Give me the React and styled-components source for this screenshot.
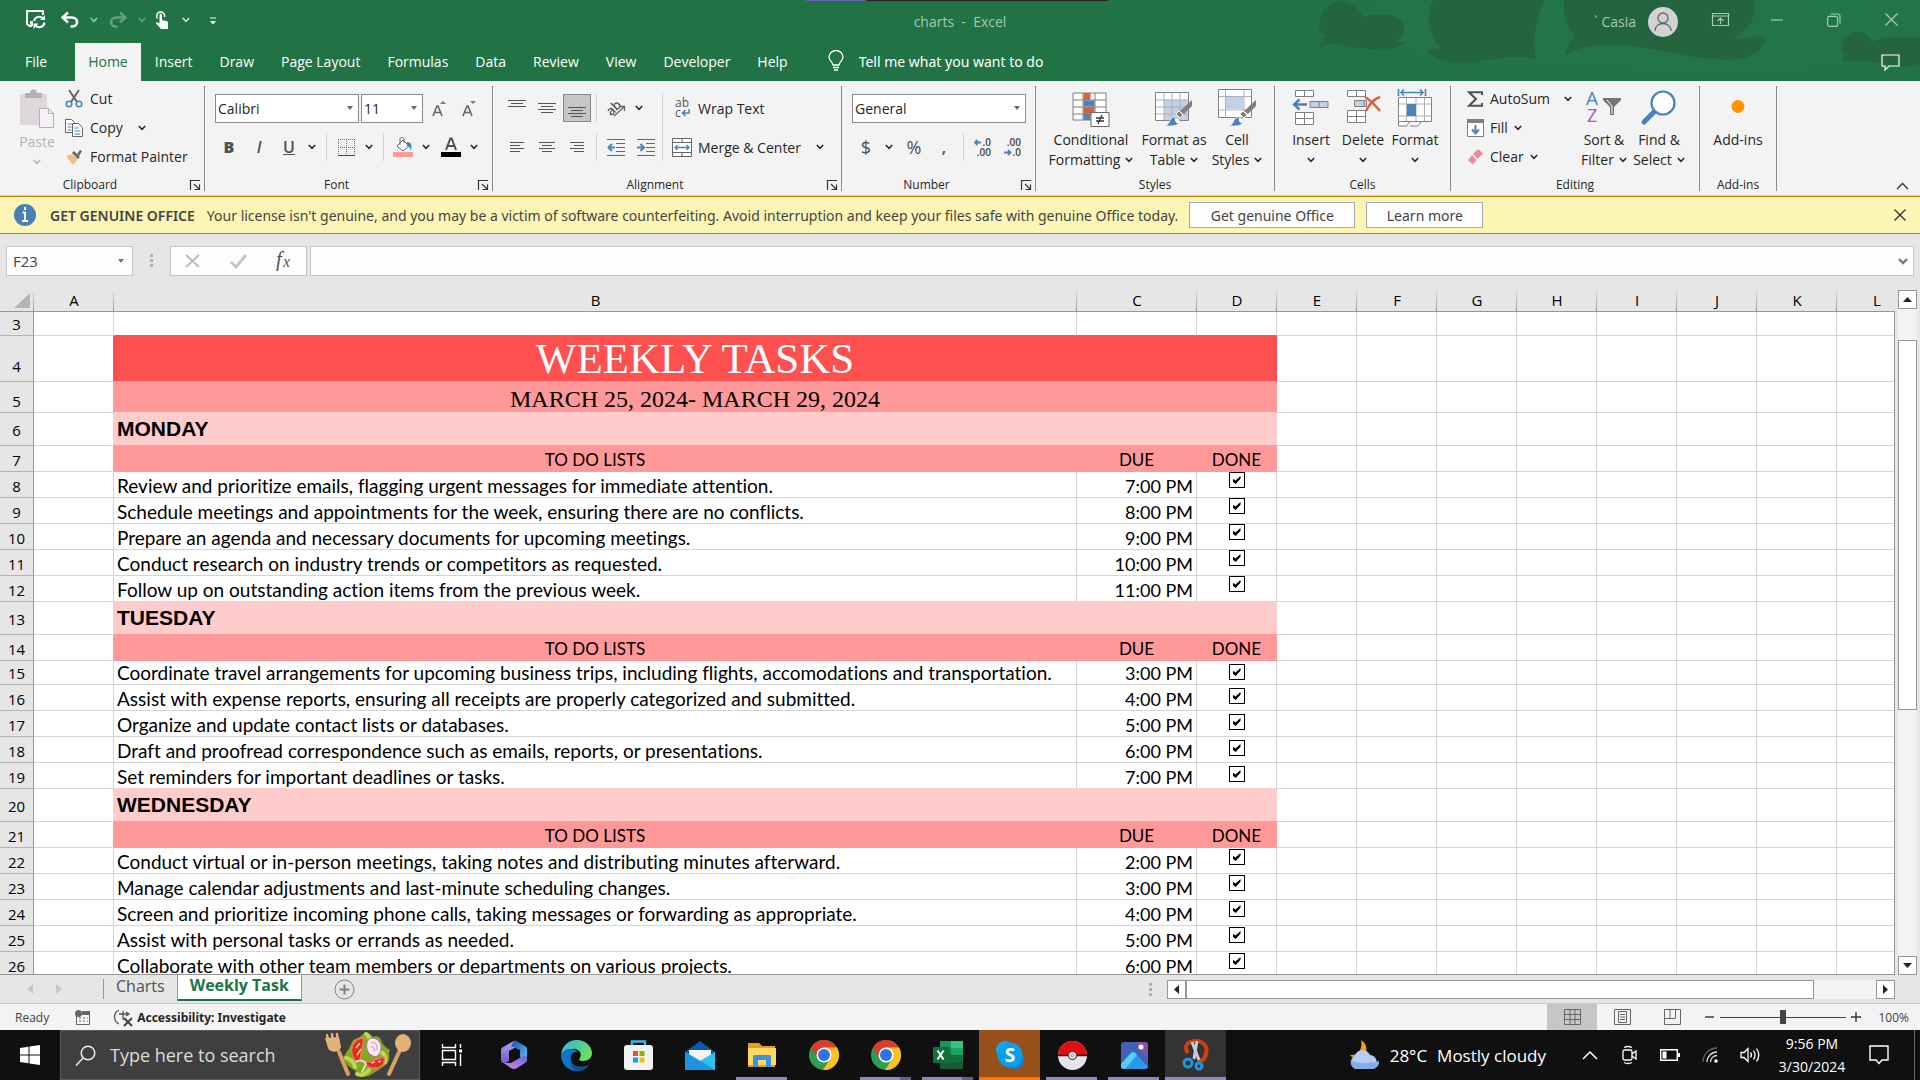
import React from "react";
import styled, { createGlobalStyle, css } from "styled-components";

const Global = createGlobalStyle`
  * { box-sizing: border-box; }
  html, body { margin: 0; padding: 0; }
  body { overflow: hidden; font-family: "Open Sans", "Noto Sans", sans-serif; font-size: 14px; color: #262626; }
  button, input, select { font: inherit; color: inherit; margin: 0; }
  svg { display: block; flex: none; overflow: visible; }
`;

const SHEET_FONT = '"Lato", "Open Sans", sans-serif';
const WIDE_UI_FONT = '"Noto Sans", "Open Sans", sans-serif';
const EXCEL_GREEN = "#217346";

const Window = styled.div`
  height: 100vh;
  display: flex;
  flex-direction: column;
  background: #e6e6e6;
`;

const PlainButton = styled.button`
  border: 0;
  padding: 0;
  background: transparent;
  display: flex;
  align-items: center;
  justify-content: center;
`;

/* ---------- header ---------- */
const Header = styled.header`
  position: relative;
  flex: none;
  background: ${EXCEL_GREEN};
  color: #fff;
`;
const HeaderArt = styled.svg`
  position: absolute;
  top: 0;
  right: 0;
`;
const TopStrip = styled.div`
  position: absolute;
  top: 0;
  left: 42%;
  width: 302px;
  height: 1px;
  background: linear-gradient(90deg, #6264a7 60px, #242424 60px);
`;
const TitleBar = styled.div`
  position: relative;
  height: 43px;
  display: grid;
  grid-template-columns: 1fr auto 1fr;
  align-items: center;
`;
const QuickAccess = styled.div`
  display: flex;
  align-items: center;
  padding: 0 0 4px 26px;
`;
const QuickButton = styled(PlainButton)`
  width: ${(p) => p.$w}px;
  height: 28px;
  opacity: ${(p) => (p.$dim ? 0.3 : 1)};
`;
const DocTitle = styled.div`
  color: #a3cbb2;
  white-space: pre;
`;
const WindowTools = styled.div`
  display: flex;
  align-items: center;
  justify-content: flex-end;
  color: #a3cbb2;
  padding-right: 15px;
`;
const Avatar = styled.span`
  width: 30px;
  height: 30px;
  margin: 0 28px 0 12px;
  border-radius: 50%;
  background: #d2d2d2;
  display: grid;
  place-items: center;
`;
const WindowButton = styled(PlainButton)`
  width: 28px;
  height: 28px;
  margin: 0 0 4px ${(p) => p.$gap || 0}px;
`;
const TabStrip = styled.nav`
  position: relative;
  height: 38px;
  display: flex;
  align-items: stretch;
  padding: 0 20px 0 12px;
`;
const RibbonTab = styled(PlainButton)`
  padding: 0 13px 2px;
  margin-right: ${(p) => (p.$first ? 15 : 1)}px;
  background: ${(p) => (p.$active ? "#f3f3f3" : "transparent")};
  color: ${(p) => (p.$active ? EXCEL_GREEN : "#fff")};
`;
const TellMe = styled(PlainButton)`
  gap: 15px;
  margin-left: 26px;
  padding-bottom: 2px;
  font-family: ${WIDE_UI_FONT};
`;
const Spacer = styled.span`
  flex: 1;
`;

/* ---------- ribbon ---------- */
const Ribbon = styled.div`
  position: relative;
  flex: none;
  height: 115px;
  display: flex;
  padding: 5px 0 4px;
  background: #f3f3f3;
  border-bottom: 1px solid #d0d0d0;
`;
const Group = styled.section`
  width: ${(p) => p.$w}px;
  border-right: 1px solid #8a8a8a;
  display: flex;
  flex-direction: column;
`;
const GroupBody = styled.div`
  flex: 1;
  display: flex;
  padding-left: ${(p) => p.$pad}px;
`;
const GroupLabel = styled.div`
  display: flex;
  align-items: center;
  height: 12px;
  font-size: 12px;
  line-height: 12px;
  padding-right: ${(p) => (p.$launcher ? 4 : 0)}px;
  & > span { flex: 1; text-align: center; padding-right: ${(p) => (p.$launcher ? 10 : 0)}px; }
`;
const Stack = styled.div`
  display: flex;
  flex-direction: column;
  margin-top: -2px;
  width: ${(p) => (p.$w ? `${p.$w}px` : "auto")};
`;
const CommandRow = styled.div`
  display: flex;
  align-items: center;
  height: 29px;
`;
const Command = styled(PlainButton)`
  gap: 6px;
  height: 28px;
`;
const IconSlot = styled.span`
  width: ${(p) => p.$w || 18}px;
  display: flex;
  justify-content: center;
`;
const ToolRows = styled.div`
  display: flex;
  flex-direction: column;
  gap: 11px;
  padding-top: 8px;
`;
const ToolRow = styled.div`
  display: flex;
  align-items: center;
  gap: ${(p) => p.$gap ?? 2}px;
  height: 28px;
`;
const Tool = styled(PlainButton)`
  width: 28px;
  height: 28px;
  color: #505050;
  font-size: 16px;
  font-weight: ${(p) => (p.$light ? 400 : 600)};
  ${(p) => p.$light && css`font-size: 18px;`}
  ${(p) => p.$on && css`background: #c6c6c6; border: 1px solid #8a8a8a;`}
`;
const DropTool = styled(PlainButton)`
  width: 18px;
  height: 28px;
  margin-left: -2px;
`;
const Rule = styled.span`
  width: 1px;
  height: 28px;
  margin: 0 3px;
  background: #d0d0d0;
`;
const TallRule = styled.span`
  width: 1px;
  height: 68px;
  margin: 7px 9px 0 2px;
  background: #d0d0d0;
`;
const SelectWrap = styled.label`
  position: relative;
  width: ${(p) => p.$w}px;
  height: 29px;
  select {
    appearance: none;
    width: 100%;
    height: 100%;
    padding: 0 2px;
    border: 1px solid #8a8a8a;
    border-radius: 0;
    background: #fff;
  }
  svg { position: absolute; right: 5px; top: 12px; pointer-events: none; }
`;
const Big = styled(PlainButton)`
  width: ${(p) => p.$w}px;
  height: 88px;
  flex-direction: column;
  justify-content: flex-start;
  padding-top: 3px;
  white-space: nowrap;
  line-height: 20px;
  color: ${(p) => (p.$off ? "#b4b4b4" : "inherit")};
  & > svg { margin-bottom: 3px; }
  & > span { display: flex; align-items: center; gap: 5px; height: 20px; }
`;
const Collapse = styled(PlainButton)`
  margin: auto 8px 0 auto;
  width: 20px;
  height: 10px;
`;

/* ---------- licence banner ---------- */
const Banner = styled.div`
  flex: none;
  height: 38px;
  display: flex;
  align-items: center;
  padding: 0 14px;
  background: #fcf5b5;
  border: 1px solid #b08a00;
  border-width: 1px 0;
  color: #444;
  white-space: nowrap;
  font-family: ${WIDE_UI_FONT};
  strong { font-weight: 600; margin: 0 12px 0 14px; }
`;
const BannerButton = styled.button`
  height: 26px;
  width: ${(p) => p.$w}px;
  margin-left: 11px;
  padding: 0;
  background: #fdfdfd;
  border: 1px solid #ababab;
`;

/* ---------- formula bar ---------- */
const FormulaBar = styled.div`
  flex: none;
  display: flex;
  padding: 12px 6px;
  height: 54px;
`;
const boxed = css`
  height: 30px;
  background: #fdfdfd;
  border: 1px solid #c6c6c6;
`;
const NameBox = styled.div`
  ${boxed}
  width: 127px;
  display: flex;
  align-items: center;
  padding-right: 7px;
  input { border: 0; background: transparent; width: 100%; min-width: 0; padding: 0 6px; color: #444; font-size: 15px; }
`;
const Grip = styled.span`
  width: 3px;
  height: 13px;
  margin: ${(p) => p.$margin};
  background: repeating-linear-gradient(#b0b0b0 0 3px, transparent 3px 5px);
`;
const FormulaButtons = styled.div`
  ${boxed}
  width: 137px;
  display: flex;
  justify-content: space-between;
  padding: 0 12px;
`;
const FormulaInput = styled.div`
  ${boxed}
  flex: 1;
  margin-left: 3px;
  display: flex;
  align-items: center;
  padding-right: 5px;
  input { flex: 1; border: 0; background: transparent; }
`;

/* ---------- sheet ---------- */
const Workspace = styled.main`
  flex: 1;
  min-height: 0;
  display: flex;
`;
const Viewport = styled.div`
  flex: 1;
  min-width: 0;
  overflow: hidden;
  background: #fff;
  border-style: solid;
  border-width: 0 1px 1px 0;
  border-image: linear-gradient(#e6e6e6 24px, #969696 24px) 1;
`;
const Sheet = styled.table`
  table-layout: fixed;
  width: 1917px;
  border-collapse: separate;
  border-spacing: 0;
  font-family: ${SHEET_FONT};
  font-size: 17px;
  line-height: 22px;
  color: #000;
  th, td { padding: 0; white-space: nowrap; overflow: hidden; }
`;
const ColHead = styled.th`
  height: 24px;
  font-family: "Open Sans", sans-serif;
  font-size: 15px;
  font-weight: 400;
  vertical-align: bottom;
  border-bottom: 1px solid #969696;
  background: linear-gradient(#e6e6e6, #969696) right / 1px 100% no-repeat #e6e6e6;
`;
const RowHead = styled.th`
  height: ${(p) => p.$h}px;
  font-family: "Open Sans", sans-serif;
  font-size: 15px;
  font-weight: 400;
  vertical-align: bottom;
  background: #e6e6e6;
  border-right: 1px solid #969696;
  border-bottom: 1px solid #b4b4b4;
  && { padding-bottom: ${(p) => p.$lift || 0}px; }
`;
const Cell = styled.td`
  vertical-align: bottom;
  text-align: ${(p) => p.$align || "left"};
  background: ${(p) => p.$fill || "#fff"};
  border-right: 1px solid ${(p) => p.$edge || p.$fill || "#d4d4d4"};
  border-bottom: 1px solid ${(p) => p.$under || "#d4d4d4"};
  && { padding: 0 3px; }
`;
const TaskCell = styled(Cell)`
  font-size: 19px;
  font-variant-ligatures: none;
`;
const TimeCell = styled(Cell)`
  font-size: 18px;
`;
const TitleCell = styled(Cell)`
  font-family: "Liberation Serif", serif;
  font-size: 43px;
  line-height: 44px;
  color: #fff;
`;
const DateCell = styled(Cell)`
  font-family: "Liberation Serif", serif;
  font-size: 24px;
  line-height: 26px;
`;
const DayCell = styled(Cell)`
  font-family: "Liberation Sans", sans-serif;
  font-size: 21px;
  font-weight: 700;
  line-height: 32px;
`;
const CheckCell = styled(Cell)`
  vertical-align: top;
  && { padding-top: ${(p) => p.$drop}px; }
`;
const Check = styled.input`
  appearance: none;
  display: block;
  width: 16px;
  height: 16px;
  && { margin: 0 auto; }
  border: 1px solid #000;
  outline: 0;
  background: #fff;
  &:checked::before {
    content: "";
    display: block;
    width: 8px;
    height: 8px;
    margin: 3px;
    background: #000;
    clip-path: polygon(0 30%, 38% 55%, 100% 0, 100% 35%, 40% 100%, 0 70%);
  }
`;

/* ---------- scrollbars ---------- */
const VScroll = styled.div`
  width: 19px;
  margin: 2px 3px 0;
  display: flex;
  flex-direction: column;
  background: #f3f3f3;
`;
const HScroll = styled.div`
  flex: 0 1 728px;
  height: 19px;
  display: flex;
  background: #f3f3f3;
`;
const ScrollArrow = styled(PlainButton)`
  width: 19px;
  height: 19px;
  flex: none;
  background: #fdfdfd;
  border: 1px solid #969696;
`;
const ScrollPart = styled.span`
  flex: ${(p) => p.$size};
  ${(p) => p.$thumb && css`background: #fff; border: 1px solid #969696;`}
`;

/* ---------- sheet tabs + status ---------- */
const SheetBar = styled.div`
  flex: none;
  height: 29px;
  display: flex;
  align-items: center;
  padding-right: 25px;
  border-bottom: 1px solid #c6c6c6;
`;
const SheetNav = styled.div`
  width: 104px;
  height: 20px;
  display: flex;
  align-items: center;
  gap: 23px;
  padding-left: 27px;
  border-right: 1px solid #969696;
`;
const SheetTab = styled.button`
  align-self: flex-start;
  height: 26px;
  padding: 0 12px 4px;
  font-size: 16px;
  line-height: 20px;
  color: ${(p) => (p.$active ? EXCEL_GREEN : "#505050")};
  font-weight: ${(p) => (p.$active ? 700 : 400)};
  background: ${(p) => (p.$active ? "#fff" : "transparent")};
  border: 0 solid #969696;
  ${(p) => p.$active && css`
    border-width: 0 1px 2px;
    border-bottom-color: ${EXCEL_GREEN};
  `}
`;
const AddSheet = styled(PlainButton)`
  margin-left: 32px;
`;
const StatusBar = styled.footer`
  flex: none;
  height: 26px;
  display: flex;
  align-items: center;
  padding: 0 11px 0 15px;
  background: #f3f3f3;
  font-size: 12px;
  color: #444;
  & > svg { margin-left: 26px; }
`;
const Access = styled(PlainButton)`
  margin-left: 23px;
  gap: 4px;
  font-family: ${WIDE_UI_FONT};
  font-weight: 700;
  color: #262626;
`;
const ViewButton = styled(PlainButton)`
  width: 50px;
  height: 26px;
  background: ${(p) => (p.$on ? "#c6c6c6" : "transparent")};
`;
const ZoomRange = styled.input`
  appearance: none;
  width: 126px;
  height: 14px;
  && { margin: 0 5px; }
  background: linear-gradient(#444, #444) center / 100% 1px no-repeat;
  &::-webkit-slider-thumb { appearance: none; width: 6px; height: 14px; background: #444; }
`;
const ZoomValue = styled.span`
  width: 48px;
  text-align: right;
`;

/* ---------- taskbar ---------- */
const Taskbar = styled.div`
  flex: none;
  height: 50px;
  display: flex;
  align-items: stretch;
  background: #101010;
  color: #fff;
`;
const StartButton = styled(PlainButton)`
  width: 60px;
`;
const SearchBox = styled.label`
  width: 360px;
  margin-right: 1px;
  display: flex;
  align-items: center;
  padding: 0 7px 0 14px;
  background: #3f3f3f;
  border: 1px solid #5a5a5a;
  input { flex: 1; min-width: 0; margin-left: 14px; padding: 0; border: 0; background: transparent; font-size: 18px; }
  input::placeholder { color: #dcdcdc; opacity: 1; }
`;
const AppButton = styled(PlainButton)`
  width: 62px;
  border: 0 solid transparent;
  position: relative;
  background: ${(p) => p.$bg || "transparent"};
  background-clip: padding-box;
  ${(p) => p.$bg && css`border-right-width: 1px;`}
  &::after {
    content: "";
    position: absolute;
    bottom: 0;
    height: 3px;
    left: ${(p) => (p.$bg ? 0 : 5)}px;
    right: ${(p) => (p.$bg ? 0 : 6)}px;
    background: ${(p) => p.$line || "transparent"};
  }
`;
const Tray = styled.div`
  margin-left: auto;
  display: flex;
  align-items: center;
`;
const Weather = styled(PlainButton)`
  font-size: 17px;
  gap: 10px;
  margin-right: 24px;
`;
const TrayButton = styled(PlainButton)`
  width: 40px;
  height: 50px;
`;
const Clock = styled.div`
  width: 84px;
  margin-right: 5px;
  text-align: center;
  font-size: 14px;
  line-height: 23px;
`;
const DesktopEdge = styled.span`
  width: 6px;
  height: 50px;
  margin-left: 15px;
  border-left: 1px solid #6a6a6a;
`;

/* ---------- small drawings ---------- */
const Svg = ({ w, h = w, vb, children, ...rest }) => (
  <svg width={w} height={h} viewBox={vb || `0 0 ${w} ${h}`} fill="none" aria-hidden="true" {...rest}>{children}</svg>
);
const Chevron = ({ c = "#262626" }) => (
  <Svg w={8} h={6}><path d="M.8 1 4 4.3 7.2 1" stroke={c} strokeWidth="1.5" /></Svg>
);
const Triangle = ({ c = "#666" }) => <Svg w={8} h={5}><path d="M1 0h6L4 4z" fill={c} /></Svg>;
const Launcher = () => (
  <Svg w={10} h={10}><path d="M.5 10V.5H10M4 4l5 5M9.5 4.5v5h-5" stroke="#333" strokeWidth="1.2" /></Svg>
);
const Lines = ({ rows, w = 18, h = 18 }) => (
  <Svg w={w} h={h}>{rows.map(([x1, x2, y]) => <path key={y} d={`M${x1} ${y}.5H${x2}`} stroke="#555" />)}</Svg>
);

const SaveIcon = () => (
  <Svg w={20} h={19}>
    <path d="M17 5V1H1v13l2.500 2H6" stroke="#fff" strokeWidth="2" />
    <path d="M4 11h3v5H4z" fill="#fff" opacity=".9" />
    <path d="M8 11a5.3 5.3 0 0 1 9.5-2M18.500 12.500a5.300 5.300 0 0 1-9.500 2.500" stroke="#fff" strokeWidth="2" />
    <path d="M19 5v5h-5zM7.500 19v-5.500h5z" fill="#fff" />
  </Svg>
);
const UndoIcon = ({ flip }) => (
  <Svg w={18} h={16} style={flip ? { transform: "scaleX(-1)" } : undefined}>
    <path d="M2 5.500h9a5 4.500 0 0 1 0 9H9.500" stroke="#fff" strokeWidth="2.600" />
    <path d="M7 .5 1.600 5.500 7 10.500" stroke="#fff" strokeWidth="2.400" />
  </Svg>
);
const TouchIcon = () => (
  <Svg w={14} h={18}>
    <path d="M2.500 7.500A4 4 0 1 1 9.500 6" stroke="#fff" strokeWidth="1.500" />
    <path d="M4.500 4c0-1.600 2.500-1.600 2.500 0v5l5 1.300c1 .3 1 1 1 2V18H6l-5-5.500c-.5-1 .8-1.800 1.800-1l1.700 1z" fill="#fff" />
  </Svg>
);
const HeaderClouds = () => (
  <HeaderArt width="620" height="81" viewBox="1300 0 620 81" aria-hidden="true">
    <path d="M1380 0h540v70c-90-6-160 8-260 2-90-6-200-4-260-22-50-16-60-30-20-50z" fill="#23774a" opacity=".5" />
    <path d="M1319 28c0-18 10-26 21-26 12 0 20 8 24 15 16-5 38-4 40 10 0 9-5 13-9 15 8 0 13-1 11 1-14 9-34 7-52 4-15-3-27-5-34 1 1-8 5-10 6-12-5-3-7-6-7-8z" fill="#24643f" />
    <path d="M1434 0h110c-8 22-13 40-8 60-16-6-36-2-60 2-20 2-46-2-50-12 6 0 12-1 14-2-10-12-16-34-6-48z" fill="#24643f" />
    <path d="M1564 0h190c4 22-10 32-20 38 14 2 24-4 31-1 0 10-8 20-28 22-36 3-66-8-112-14-30-2-46 2-60 10 0-9 6-14 10-18-10-12-12-26-11-37z" fill="#24643f" />
    <path d="M1812 0h60c-4 8-10 16-8 24-12-5-24 0-30-6-12-4-18-10-22-18z" fill="#21774a" />
    <path d="M1842 48c0-10 6-16 14-16 9 0 14 5 16 10 12-6 28-6 48-4v28c-20 2-44-4-58-5-9-1-16 0-20 2 0-4 2-6 3-7-2-3-3-5-3-8z" fill="#24643f" />
  </HeaderArt>
);

const Brush = ({ x, y }) => (
  <g transform={`translate(${x} ${y})`}>
    <path d="M27 0v6l-8 8-4-3z" fill="#808080" />
    <path d="m14 11 4 4-3 3-4-4z" fill="#808080" stroke="#f3f3f3" />
    <path d="M0 26c5-1 4-9 10-9 4 0 6 4 3 7-3 2.500-9 2-13 2z" fill="#4a82bb" stroke="#f3f3f3" strokeWidth=".8" />
    <path d="M10 18c3 0 5 2 3.500 5-3 0-4-2-3.500-5z" fill="#fff" />
  </g>
);
const PasteIcon = () => (
  <Svg w={36} h={40}>
    <path d="M1 5h27v31H1z" fill="#dcd8dc" />
    <path d="M6 4h5c0-5 7-5 7 0h5v5H6z" fill="#b4b0b4" />
    <path d="M20.500 19.500h9l5 5v14h-14z" fill="#f5f2f7" stroke="#b4b0b4" /><path d="M29.500 19.500v5h5" stroke="#b4b0b4" />
  </Svg>
);
const CutIcon = () => (
  <Svg w={18} h={19}>
    <path d="m4 1 8 12M14 1 6 13" stroke="#666" strokeWidth="2" />
    <circle cx="4" cy="15" r="2.800" stroke="#4a82bb" strokeWidth="1.500" /><circle cx="14" cy="15" r="2.800" stroke="#4a82bb" strokeWidth="1.500" />
  </Svg>
);
const CopyIcon = () => (
  <Svg w={18} h={18}>
    <path d="M.5.5h6l3 3v10h-9z" fill="#fff" stroke="#666" /><path d="M2.500 5h4m-4 3h4m-4 3h4" stroke="#4a82bb" />
    <path d="M7.500 4.500h6l4 4v9h-10z" fill="#fff" stroke="#666" /><path d="M9.500 9h4m-4 3h6m-6 3h6" stroke="#4a82bb" />
  </Svg>
);
const PainterIcon = () => (
  <Svg w={18} h={16}>
    <path d="m1 7 6-2 6 5-5 6z" fill="#eac282" /><path d="m7 4 6 6 2-2-6-6z" fill="#666" /><path d="m12 5 3-4 2 1-3 5z" fill="#666" />
  </Svg>
);
const BordersIcon = () => (
  <Svg w={17} h={17}>
    <path d="M0 .5h17M.5 0v17M16.500 0v17M0 8.500h17M8.500 0v17" stroke="#666" strokeDasharray="1 1" /><path d="M0 16.500h17" stroke="#444" />
  </Svg>
);
const FillColorIcon = () => (
  <Svg w={20} h={20}>
    <path d="m10 3 6 6-6 5-6-5z" fill="#fff" stroke="#666" /><path d="M7 8V2c0-2 4-2 4 0v4" stroke="#666" />
    <path d="M14 5c5 0 5 4 4 9-1-3-1-4-4-5z" fill="#4a82bb" /><path d="M0 15h20v5H0z" fill="#ff9999" />
  </Svg>
);
const FontColorIcon = () => (
  <Svg w={20} h={20}><path d="M5 13 9.300 1.500h1.400L15 13M6.700 9h6.600" stroke="#505050" strokeWidth="2" /><path d="M0 15h20v5H0z" fill="#000" /></Svg>
);
const SizeIcon = ({ down }) => (
  <Svg w={14} h={17}>
    <path d="M1 16 5 6h1l4 10M2.500 12.500h6" stroke="#666" strokeWidth="1.600" />
    <path d={down ? "M8 1h6l-3 3z" : "M8 4h6l-3-3z"} fill="#4a82bb" />
  </Svg>
);
const OrientIcon = () => (
  <Svg w={20} h={18}>
    <text x="0" y="13" fontSize="13" fill="#555" fontFamily="Open Sans" transform="rotate(-45 8 9)">ab</text>
    <path d="m8 17 10-9M13.500 7.500H18.500V12" stroke="#666" strokeWidth="1.300" />
  </Svg>
);
const IndentIcon = ({ out }) => (
  <Svg w={18} h={17}>
    <path d="M0 .5h18M9 4.500h9M9 8.500h9M9 12.500h9M0 16.500h18" stroke="#666" />
    <path d={out ? "M8 8.500H2M5 5 1.500 8.500 5 12" : "M0 8.500h6M3.500 5 7 8.500 3.500 12"} stroke="#4a82bb" strokeWidth="2" />
  </Svg>
);
const WrapIcon = () => (
  <Svg w={17} h={19}>
    <text x="1" y="8" fontSize="12" fill="#555" fontFamily="Open Sans">ab</text>
    <text x="1" y="18" fontSize="12" fill="#555" fontFamily="Open Sans">c</text>
    <path d="M15 10v4H9M11.500 11 8.500 14l3 3" stroke="#4a82bb" strokeWidth="1.500" />
  </Svg>
);
const MergeIcon = () => (
  <Svg w={20} h={19}>
    <path d="M.5.5h19v18H.5zM.5 4.500h19M.5 14.500h19M10 .5v4M10 14.500v4" fill="#fff" stroke="#666" />
    <path d="M3 9.500h14M5.500 7 3 9.500 5.500 12M14.500 7 17 9.500 14.500 12" stroke="#4a82bb" strokeWidth="1.400" />
  </Svg>
);
const DecimalIcon = ({ less }) => (
  <Svg w={18} h={18}>
    <text x="17" y="8" textAnchor="end" fontSize="10" fill="#444" fontFamily="Open Sans">{less ? ".00" : ".0"}</text>
    <text x="17" y="18" textAnchor="end" fontSize="10" fill="#444" fontFamily="Open Sans">{less ? ".0" : ".00"}</text>
    <path d={less ? "M0 14.500h6M4 12l2.500 2.500L4 17" : "M7 4.500H1M3.500 2 1 4.500 3.500 7"} stroke="#4a82bb" strokeWidth="1.800" />
  </Svg>
);
const CondIcon = () => (
  <Svg w={38} h={38}>
    <path d="M1 4h33v27H1z" fill="#fff" />
    <path d="M11.500 4h7v7h-7zM11.500 18h11v7h-11z" fill="#d9603f" /><path d="M11.500 11.500h11v6h-11zM11.500 25h7v6h-7z" fill="#4a82bb" />
    <path d="M1 4h33v27H1zM1 11h33M1 18h33M1 25h33M11 4v27M23 4v27" stroke="#808080" />
    <path d="M19 23.500h18v14H19z" fill="#fff" stroke="#666" /><path d="M24 29h8M24 32h8M30 26l-4 9" stroke="#333" strokeWidth="1.300" />
  </Svg>
);
const TableIcon = () => (
  <Svg w={38} h={38}>
    <path d="M.5 3.500h33v28H.5z" fill="#fff" /><path d="M9 11h25v21H9z" fill="#bfd2e8" />
    <path d="M.5 11h33M.5 18h33M.5 25h33M9 3v28M17 3v28M25 3v28" stroke="#b0b0b0" /><path d="M.5 3.500h33v28H.5z" stroke="#808080" />
    <Brush x={10} y={11} />
  </Svg>
);
const CellStyleIcon = () => (
  <Svg w={38} h={38}>
    <path d="M.5.500h33v28H.5z" fill="#fff" /><path d="M.5 7.500h33M.5 21h33M7.500.500v28M26 .500v28" stroke="#b0b0b0" />
    <path d="M8 8h18v12H8z" fill="#bfd2e8" /><path d="M.5.500h33v28H.5z" stroke="#808080" />
    <Brush x={11} y={11} />
  </Svg>
);
const grid2 = "M3.500 1.500h18v6h-18zM12.500 1.500v6M3.500 23.500h18v12h-18zM12.500 23.500v12M3.500 29.500h18";
const InsertIcon = () => (
  <Svg w={38} h={38}>
    <path d={grid2} fill="#fff" stroke="#808080" /><path d="M18 12.500h18v6H18zM27 12.500v6" fill="#bfd2e8" stroke="#808080" />
    <path d="M15 15.500H2M7.500 10.500 2 15.500l5.500 5" stroke="#4a82bb" strokeWidth="2.400" />
  </Svg>
);
const DeleteIcon = () => (
  <Svg w={38} h={38}>
    <path d="M3.500 1.500h18v6h-18zM12.500 1.500v6M3.500 21.500h18v12h-18zM12.500 21.500v12M3.500 27.500h18" fill="#fff" stroke="#808080" />
    <path d="M10.500 11.500h12v6h-12zM20 11.500v6" fill="#bfd2e8" stroke="#808080" />
    <path d="M21 8c5 3 10 8 15 14M36 8c-6 2-11 8-14 14" stroke="#d9603f" strokeWidth="2.400" />
  </Svg>
);
const FormatIcon = () => (
  <Svg w={38} h={38}>
    <path d="M2.500 0v7M29.500 0v7M5 3.500h22M8 .5l-3 3 3 3M24 .5l3 3-3 3" stroke="#4a82bb" strokeWidth="1.600" />
    <path d="M2.500 8.500h33v24h-33z" fill="#fff" /><path d="M2.500 15h33M2.500 27h33M10.500 8.500v24M20 8.500v24M28.500 8.500v24" stroke="#b0b0b0" />
    <path d="M11 15h9v12h-9z" fill="#4a82bb" /><path d="M2.500 8.500h33v24h-33z" stroke="#808080" />
    <path d="M2.500 33v4h8l3-4M14 37h8l3-4" fill="#fff" stroke="#808080" />
  </Svg>
);
const SigmaIcon = () => <Svg w={16} h={16}><path d="M15 4V1.200H2L9 8l-7 6.800h13V12" stroke="#505050" strokeWidth="2" /></Svg>;
const FillIcon = () => (
  <Svg w={17} h={18}><path d="M.5.5h16v17H.5z" fill="#fff" stroke="#808080" /><path d="M0 0h17v4H0z" fill="#808080" />
    <path d="M8.500 6v8M5 10.500 8.500 14.500 12 10.500" stroke="#4a82bb" strokeWidth="2" /></Svg>
);
const EraserIcon = () => <Svg w={17} h={16}><path d="m6 5 5-5 5 4.500-5.500 5.500zM5 6l4.500 5L6 15.500 1 11z" fill="#e68a9c" /></Svg>;
const SortIcon = () => (
  <Svg w={36} h={38}>
    <text x="0" y="16" fontSize="19" fill="#4a82bb" fontFamily="Open Sans">A</text>
    <text x="1" y="33" fontSize="18" fill="#9b62b8" fontFamily="Open Sans">Z</text>
    <path d="M17 9h18v2l-7 7v8h-4v-8l-7-7z" fill="#757575" /><path d="M21 11l5 6v8" stroke="#fff" />
  </Svg>
);
const FindIcon = () => (
  <Svg w={36} h={38}><path d="m3 33 11-11" stroke="#4a82bb" strokeWidth="5" strokeLinecap="round" /><circle cx="22" cy="14" r="11.500" fill="#fff" stroke="#4a82bb" strokeWidth="2.200" /></Svg>
);
const AddinsIcon = () => <Svg w={36} h={38}><circle cx="18" cy="17.500" r="6.500" fill="#ff9200" /></Svg>;

/* taskbar drawings */
const Salad = () => (
  <Svg w={88} h={46}>
    <path d="m15 20 9 22" stroke="#d9a066" strokeWidth="4" strokeLinecap="round" />
    <path d="M1 6 4 16c2 5 12 5 13-1l-2-10" fill="#e3b27c" /><path d="m3 3 2 10M8 2l1 10M13 2l1 10" stroke="#e3b27c" strokeWidth="2.400" strokeLinecap="round" />
    <path d="m76 18-11 24" stroke="#d9a066" strokeWidth="4" strokeLinecap="round" /><ellipse cx="79" cy="11" rx="8" ry="9" fill="#e3b27c" />
    <circle cx="43" cy="23" r="19" fill="#c9743a" />
    <path d="M19 25c3-2 3-6 6-8l4-9c5-2 8-3 12-8 5 1 6 3 8 5 5-2 8 1 9 6 2 3 6 6 8 7-2 3 0 6-1 10-2 6-8 8-12 9-3 5-9 8-15 8-5 0-6-4-7-7-6-2-10-7-12-13z" fill="#86a81e" />
    <path d="M42 2c5 3 4 9 7 14M22 26c4 1 8 4 9 9M55 20c5 0 7 4 6 10M33 42c4 2 9 0 12-4" stroke="#bdd750" strokeWidth="4" strokeLinecap="round" />
    <path d="M40 6c-9 0-14 8-12 16 1 6 4 8 8 6z" fill="#d6301e" stroke="#f0765a" strokeWidth="1.500" /><path d="m36 11-4 5m5 1-4 6" stroke="#ffc890" strokeWidth="1.600" />
    <path d="M40 30c5 1 15-4 20-5 2 6-3 12-10 11-5 0-8-2-10-6z" fill="#d6301e" stroke="#f0765a" strokeWidth="1.500" /><path d="m47 31 4-1m3 0 3-1" stroke="#ffc890" strokeWidth="1.600" />
    <path d="M44 8c6-5 14 1 13 9-1 6-5 9-8 7-6-2-8-10-5-16z" fill="#f4e9f3" stroke="#b86ba8" /><path d="M47 11c4-2 7 2 6 7M47 15c2-1 4 1 3 4" stroke="#c487b6" />
    <path d="M32 30c4-3 9-1 10 2l-4 8" stroke="#f4e9f3" strokeWidth="1.600" />
  </Svg>
);
const TaskViewIcon = () => (
  <Svg w={22} h={22}><path d="M1.500 0v3.500h13V0M1.500 6.500h13v9h-13zM1.500 22v-3.500h13V22M19.500 0v4M19.500 10v12" stroke="#fff" strokeWidth="1.400" /><path d="M18 5.500h3v3h-3z" fill="#fff" /></Svg>
);
const OfficeIcon = () => (
  <Svg w={28} h={30}>
    <defs>
      <linearGradient id="m365a" x1="0" y1="0" x2="0" y2="1"><stop stopColor="#b9a2f2" /><stop offset="1" stopColor="#6a5bd0" /></linearGradient>
      <linearGradient id="m365b" x1="0" y1="0" x2="1" y2="1"><stop stopColor="#1f4fb0" /><stop offset="1" stopColor="#53c6f8" /></linearGradient>
      <linearGradient id="m365c" x1="0" y1="1" x2="1" y2="0"><stop stopColor="#d58ae8" /><stop offset="1" stopColor="#6f63dc" /></linearGradient>
    </defs>
    <path d="M14 1 3 7q-2 1-2 3v10q0 3 3 3 3 0 5-2V11l9-5z" fill="url(#m365a)" />
    <path d="M14 1q2-1 4 1l7 4q2 1 2 3v12l-7-4v-7l-9-4z" fill="url(#m365b)" />
    <path d="m2 22 9 6q3 2 6 0l8-5q2-1 2-4v-2q-1-2-4-1l-12 7-5 0z" fill="url(#m365c)" />
  </Svg>
);
const EdgeIcon = () => (
  <Svg w={31} h={31}>
    <defs><linearGradient id="edgeTop" x1="0" y1="0" x2="1" y2=".6"><stop stopColor="#2fb3ec" /><stop offset="1" stopColor="#6be05a" /></linearGradient></defs>
    <path d="M0 15C1 6 7 0 16 0c9 0 15 7 15 13 0 5-4 8-9 8-3 0-5-1-3-3 3-6-3-10-8-9C6 9 2 11 0 15z" fill="url(#edgeTop)" />
    <path d="M0 15c4-8 14-7 17-3-5-1-8 3-7 8 1 6 9 9 18 5-3 4-7 6-12 6C7 31 0 24 0 15z" fill="#1273c8" />
    <path d="M10 20c1 6 9 9 18 5-3 4-7 6-12 6-5-2-7-6-6-11z" fill="#0b4f94" />
  </Svg>
);
const StoreIcon = () => (
  <Svg w={29} h={30}><path d="M8 6V1.500h13V6" stroke="#35b8ef" strokeWidth="2.400" /><rect y="5" width="29" height="25" rx="3" fill="#f2f2f2" />
    <path d="M9 11h5v5H9z" fill="#f25022" /><path d="M15.500 11h5v5h-5z" fill="#7fba00" /><path d="M9 17.500h5v5H9z" fill="#00a4ef" /><path d="M15.500 17.500h5v5h-5z" fill="#ffb900" /></Svg>
);
const MailIcon = () => (
  <Svg w={30} h={29}><path d="M0 11 15 0l15 11v8H0z" fill="#0a5aa8" /><path d="M4 9h22v12H4z" fill="#f4f4f4" /><path d="M0 11l15 9L30 11v18H0z" fill="#2cc0f4" /><path d="M0 11 19 22 30 29H0z" fill="#1e93e0" /></Svg>
);
const FolderIcon = () => (
  <Svg w={28} h={26}><path d="M0 1h11l3 3h13v21H0z" fill="#e0a21a" /><path d="M0 6h28v17H0z" fill="#ffd766" /><path d="M5 25V15c0-2 2-2 2-2h14s2 0 2 2v10h-5v-7h-8v7z" fill="#3a93dc" /></Svg>
);
const ChromeIcon = () => (
  <Svg w={30} h={30}>
    <circle cx="15" cy="15" r="15" fill="#2f9e4f" /><path d="M2 7.500A15 15 0 0 1 28 7.500H15l-6.500 11z" fill="#dc3b2e" />
    <path d="M28 7.500A15 15 0 0 1 14 30l7.500-11.500L15 7.500z" fill="#fcc31e" /><circle cx="15" cy="15" r="7.500" fill="#fff" /><circle cx="15" cy="15" r="6" fill="#2f73e8" />
  </Svg>
);
const XlIcon = () => (
  <Svg w={30} h={28}><path d="M7 0h11v28H7z" fill="#1c9558" /><path d="M18 0h12v7H18z" fill="#33c481" /><path d="M7 7h11v7H7z" fill="#107c41" /><path d="M18 7h12v7H18z" fill="#21a366" /><path d="M7 14h23v7H7z" fill="#12703c" /><path d="M7 21h23v7H7z" fill="#185c37" />
    <rect y="6" width="16" height="16" rx="1" fill="#0f7339" /><path d="m4.500 9.500 6 9M10.500 9.500l-6 9" stroke="#fff" strokeWidth="2" /></Svg>
);
const SkypeIcon = () => (
  <Svg w={28} h={28}><circle cx="9" cy="9" r="9" fill="#18a8ee" /><circle cx="19" cy="19" r="9" fill="#0b86d8" /><circle cx="14" cy="14" r="12.500" fill="#08a0ea" />
    <text x="14" y="21" textAnchor="middle" fontSize="19" fontWeight="700" fill="#fff" fontFamily="Open Sans">S</text></Svg>
);
const BallIcon = () => (
  <Svg w={29} h={29}><circle cx="14.500" cy="14.500" r="14.500" fill="#e2e6ec" /><path d="M0 14.500a14.500 14.500 0 0 1 29 0z" fill="#e00e0e" /><path d="M0 14.500h29" stroke="#222" strokeWidth="1.500" /><circle cx="14.500" cy="14.500" r="4" fill="#fff" stroke="#555" strokeWidth="1.500" /><circle cx="14.500" cy="14.500" r="1.500" stroke="#777" /></Svg>
);
const PhotosIcon = () => (
  <Svg w={27} h={27}><rect width="27" height="27" rx="3" fill="#3f62b8" /><path d="M14 0h10q3 0 3 3v14z" fill="#8a4fae" /><path d="M0 22 10 11q2-2 4 0l13 14q-1 2-3 2H3q-3 0-3-3z" fill="#2a9be8" /><path d="M0 22 10 11q2-2 4 0l2 2L4 27q-4 0-4-3z" fill="#54d0f8" /><circle cx="20" cy="5" r="2.500" fill="#fff" /></Svg>
);
const SnipIcon = () => (
  <Svg w={28} h={30}><path d="M6 13C1 6 6 1 14 1c8 0 12 6 10 13-1 5-4 8-8 6" stroke="#cc4014" strokeWidth="4" /><path d="M10 2l7 18M15 1l-3 18" stroke="#c8ccd4" strokeWidth="3" /><circle cx="6" cy="23" r="4" stroke="#1e96e4" strokeWidth="3" /><circle cx="17" cy="26" r="3" stroke="#1e96e4" strokeWidth="3" /></Svg>
);
const WeatherIcon = () => (
  <Svg w={31} h={30}><path d="M12 0c7 4 7 13 1 18-4 2-9 1-12-3 9 1 13-7 11-15z" fill="#f2a01c" /><path d="M7 29a7 7 0 0 1-1-13 8 8 0 0 1 15-1 7.500 7.500 0 0 1 3 14z" fill="#b4cdf8" /><path d="M7 29a7 7 0 0 1-5-9c6 4 16 4 28 1a7 7 0 0 1-6 8z" fill="#86acee" /></Svg>
);

const apps = [
  { name: "Task View", icon: TaskViewIcon },
  { name: "Microsoft 365", icon: OfficeIcon },
  { name: "Edge", icon: EdgeIcon },
  { name: "Store", icon: StoreIcon },
  { name: "Mail", icon: MailIcon },
  { name: "File Explorer", icon: FolderIcon, line: "#8f8ab5" },
  { name: "Chrome", icon: ChromeIcon },
  { name: "Chrome windows", icon: ChromeIcon, line: "linear-gradient(90deg, #8f8ab5 40px, #67637f 40px)" },
  { name: "Excel", icon: XlIcon, line: "linear-gradient(90deg, #8f8ab5 40px, #67637f 40px)" },
  { name: "Skype", icon: SkypeIcon, bg: "#98501a", line: "#ff7300" },
  { name: "Game", icon: BallIcon, line: "#8f8ab5" },
  { name: "Photos", icon: PhotosIcon, line: "#8f8ab5" },
  { name: "Snipping Tool", icon: SnipIcon, bg: "#333", line: "#8f8ab5" },
];

/* ---------- sheet data ---------- */
const BLUSH = "#ffcccc";
const ROSE = "#ff9999";
const CORAL = "#ff5050";
const days = [
  { day: "MONDAY", drop: 0, tasks: [
    ["Review and prioritize emails, flagging urgent messages for immediate attention.", "7:00 PM"],
    ["Schedule meetings and appointments for the week, ensuring there are no conflicts.", "8:00 PM"],
    ["Prepare an agenda and necessary documents for upcoming meetings.", "9:00 PM"],
    ["Conduct research on industry trends or competitors as requested.", "10:00 PM"],
    ["Follow up on outstanding action items from the previous week.", "11:00 PM"],
  ] },
  { day: "TUESDAY", drop: 3, tasks: [
    ["Coordinate travel arrangements for upcoming business trips, including flights, accomodations and transportation.", "3:00 PM", 24],
    ["Assist with expense reports, ensuring all receipts are properly categorized and submitted.", "4:00 PM"],
    ["Organize and update contact lists or databases.", "5:00 PM"],
    ["Draft and proofread correspondence such as emails, reports, or presentations.", "6:00 PM"],
    ["Set reminders for important deadlines or tasks.", "7:00 PM"],
  ] },
  { day: "WEDNESDAY", drop: 1, tasks: [
    ["Conduct virtual or in-person meetings, taking notes and distributing minutes afterward.", "2:00 PM"],
    ["Manage calendar adjustments and last-minute scheduling changes.", "3:00 PM"],
    ["Screen and prioritize incoming phone calls, taking messages or forwarding as appropriate.", "4:00 PM"],
    ["Assist with personal tasks or errands as needed.", "5:00 PM"],
    ["Collaborate with other team members or departments on various projects.", "6:00 PM"],
  ] },
];
const columns = ["A", "B", "C", "D", "E", "F", "G", "H", "I", "J", "K", "L"];
const colWidths = [34, 80, 963, 120, 80, 80, 80, 80, 80, 80, 80, 80, 80];

const SheetRow = ({ n, h, lift, edge, children }) => (
  <tr>
    <RowHead scope="row" $h={h} $lift={lift}>{n}</RowHead>
    <Cell $edge={edge} />
    {children}
    {columns.slice(4).map((c) => <Cell key={c} />)}
  </tr>
);

function SheetBody() {
  let n = 6;
  const rows = [
    <SheetRow key={3} n={3} h={24}><Cell $under={CORAL} /><Cell $under={CORAL} /><Cell $under={CORAL} /></SheetRow>,
    <SheetRow key={4} n={4} h={46} lift={4} edge={CORAL}><TitleCell colSpan={3} $align="center" $fill={CORAL} $under={ROSE}>WEEKLY TASKS</TitleCell></SheetRow>,
    <SheetRow key={5} n={5} h={31} edge={ROSE}><DateCell colSpan={3} $align="center" $fill={ROSE} $under={BLUSH}>MARCH 25, 2024- MARCH 29, 2024</DateCell></SheetRow>,
  ];
  days.forEach((d, di) => {
    rows.push(<SheetRow key={n} n={n++} h={33} lift={4} edge={BLUSH}><DayCell colSpan={3} $fill={BLUSH} $under={ROSE}>{d.day}</DayCell></SheetRow>);
    rows.push(
      <SheetRow key={n} n={n++} h={26} edge={ROSE}>
        {["TO DO LISTS", "DUE", "DONE"].map((t) => <Cell key={t} $align="center" $fill={ROSE} $under={ROSE}>{t}</Cell>)}
      </SheetRow>
    );
    d.tasks.forEach(([task, due, h], ti) => {
      const under = ti === 4 && di < 2 ? BLUSH : undefined;
      rows.push(
        <SheetRow key={n} n={n++} h={h || 26}>
          <TaskCell $under={under}>{task}</TaskCell>
          <TimeCell $align="right" $under={under}>{due}</TimeCell>
          <CheckCell $under={under} $drop={d.drop}><Check type="checkbox" defaultChecked aria-label={`Done: ${task}`} /></CheckCell>
        </SheetRow>
      );
    });
  });
  return <tbody>{rows}</tbody>;
}

const Combo = ({ w, label, value }) => (
  <SelectWrap $w={w}>
    <select aria-label={label} defaultValue={value}><option>{value}</option></select>
    <Triangle />
  </SelectWrap>
);
const Drop = ({ label }) => <DropTool aria-label={label}><Chevron /></DropTool>;
const BigButton = ({ w, icon: Icon, top, bottom, drop = true, off }) => (
  <Big $w={w} $off={off}>
    <Icon />
    <span>{top}</span>
    <span>{bottom}{drop && <Chevron c={off ? "#b4b4b4" : "#262626"} />}</span>
  </Big>
);
const RibbonGroup = ({ w, pad = 10, label, launcher, children }) => (
  <Group $w={w}>
    <GroupBody $pad={pad}>{children}</GroupBody>
    <GroupLabel $launcher={launcher}><span>{label}</span>{launcher && <PlainButton aria-label={`${label} settings`}><Launcher /></PlainButton>}</GroupLabel>
  </Group>
);

export default function App() {
  return (
    <Window>
      <Global />
      <Header>
        <HeaderClouds />
        <TopStrip />
        <TitleBar>
          <QuickAccess>
            <QuickButton $w={20} aria-label="Save"><SaveIcon /></QuickButton>
            <QuickButton $w={48} aria-label="Undo"><UndoIcon /></QuickButton>
            <QuickButton $w={0} aria-label="Undo list"><Chevron c="#a3cbb2" /></QuickButton>
            <QuickButton $w={48} $dim aria-label="Redo"><UndoIcon flip /></QuickButton>
            <QuickButton $w={0} $dim aria-label="Redo list"><Chevron c="#fff" /></QuickButton>
            <QuickButton $w={40} aria-label="Touch mode"><TouchIcon /></QuickButton>
            <QuickButton $w={8} aria-label="Touch mode list"><Chevron c="#cfe3d7" /></QuickButton>
            <QuickButton $w={46} aria-label="Customize"><Svg w={6} h={8}><path d="M0 2h6" stroke="#fff" /><path d="M0 5h6L3 8.500z" fill="#fff" /></Svg></QuickButton>
          </QuickAccess>
          <DocTitle>{"charts  -  Excel"}</DocTitle>
          <WindowTools>
            <span>` Casia</span>
            <Avatar><Svg w={20} h={20}><circle cx="10" cy="6" r="5" stroke="#666" strokeWidth="1.300" /><path d="M2 19c0-10 16-10 16 0" stroke="#666" strokeWidth="1.300" /></Svg></Avatar>
            <WindowButton aria-label="Ribbon display"><Svg w={17} h={13}><path d="M.5.5h16v12H.5zM.5 3h16M8.500 11V5.500M5.500 8l3-3 3 3" stroke="#a3cbb2" strokeWidth="1.200" /></Svg></WindowButton>
            <WindowButton $gap={29} aria-label="Minimize"><Svg w={12} h={2}><path d="M0 1h12" stroke="#a3cbb2" strokeWidth="1.200" /></Svg></WindowButton>
            <WindowButton $gap={29} aria-label="Restore"><Svg w={14} h={14}><rect x=".6" y="3.400" width="10" height="10" rx="2" stroke="#a3cbb2" strokeWidth="1.200" /><path d="M3.500 1h7q2.500 0 2.500 2.500v7" stroke="#a3cbb2" strokeWidth="1.200" /></Svg></WindowButton>
            <WindowButton $gap={29} aria-label="Close"><Svg w={13} h={13}><path d="m.5.500 12 12M12.500.500l-12 12" stroke="#a3cbb2" strokeWidth="1.300" /></Svg></WindowButton>
          </WindowTools>
        </TitleBar>
        <TabStrip>
          {["File", "Home", "Insert", "Draw", "Page Layout", "Formulas", "Data", "Review", "View", "Developer", "Help"].map((t) => (
            <RibbonTab key={t} $first={t === "File"} $active={t === "Home"}>{t}</RibbonTab>
          ))}
          <TellMe>
            <Svg w={16} h={20}><path d="M5 14c0-3-4-4-4-8a7 6.500 0 0 1 14 0c0 4-4 5-4 8zM5 16.500h6M6 19h4" stroke="#fff" strokeWidth="1.300" /></Svg>
            Tell me what you want to do
          </TellMe>
          <Spacer />
          <PlainButton aria-label="Comments"><Svg w={19} h={17}><path d="M1 1h17v11H8l-4 4v-4H1z" stroke="#fff" strokeWidth="1.200" /></Svg></PlainButton>
        </TabStrip>
      </Header>

      <Ribbon>
        <RibbonGroup w={205} label="Clipboard" launcher>
          <BigButton w={54} icon={PasteIcon} top="Paste" off />
          <Stack>
            <CommandRow><Command><IconSlot $w={20}><CutIcon /></IconSlot>Cut</Command></CommandRow>
            <CommandRow><Command><IconSlot $w={20}><CopyIcon /></IconSlot>Copy</Command><Command aria-label="Copy options"><IconSlot $w={38}><Chevron /></IconSlot></Command></CommandRow>
            <CommandRow><Command><IconSlot $w={20}><PainterIcon /></IconSlot>Format Painter</Command></CommandRow>
          </Stack>
        </RibbonGroup>

        <RibbonGroup w={288} pad={10} label="Font" launcher>
          <ToolRows>
            <ToolRow>
              <Combo w={144} label="Font" value="Calibri" />
              <Combo w={62} label="Font size" value="11" />
              <Tool aria-label="Grow font"><SizeIcon /></Tool>
              <Tool aria-label="Shrink font"><SizeIcon down /></Tool>
            </ToolRow>
            <ToolRow>
              <Tool><b>B</b></Tool>
              <Tool><i>I</i></Tool>
              <Tool><u>U</u></Tool><Drop label="Underline options" />
              <Rule />
              <Tool aria-label="Borders"><BordersIcon /></Tool><Drop label="Border options" />
              <Rule />
              <Tool aria-label="Fill colour"><FillColorIcon /></Tool><Drop label="Fill colours" />
              <Tool aria-label="Font colour"><FontColorIcon /></Tool><Drop label="Font colours" />
            </ToolRow>
          </ToolRows>
        </RibbonGroup>

        <RibbonGroup w={349} label="Alignment" launcher>
          <ToolRows>
            <ToolRow>
              <Tool aria-label="Top align"><Lines rows={[[0, 18, 1], [3, 15, 4], [0, 18, 7]]} /></Tool>
              <Tool aria-label="Middle align"><Lines rows={[[0, 18, 4], [3, 15, 7], [0, 18, 10], [3, 15, 13]]} /></Tool>
              <Tool $on aria-label="Bottom align"><Lines rows={[[0, 18, 8], [3, 15, 11], [0, 18, 14], [3, 15, 17]]} /></Tool>
              <Rule />
              <Tool aria-label="Orientation"><OrientIcon /></Tool><Drop label="Orientation options" />
            </ToolRow>
            <ToolRow>
              <Tool aria-label="Align left"><Lines rows={[[2, 16, 4], [2, 12, 7], [2, 16, 10], [2, 12, 13]]} /></Tool>
              <Tool aria-label="Centre"><Lines rows={[[1, 17, 4], [4, 14, 7], [1, 17, 10], [4, 14, 13]]} /></Tool>
              <Tool aria-label="Align right"><Lines rows={[[2, 16, 4], [6, 16, 7], [2, 16, 10], [6, 16, 13]]} /></Tool>
              <Rule />
              <Tool aria-label="Decrease indent"><IndentIcon out /></Tool>
              <Tool aria-label="Increase indent"><IndentIcon /></Tool>
            </ToolRow>
          </ToolRows>
          <TallRule />
          <ToolRows>
            <ToolRow><Command><IconSlot $w={20}><WrapIcon /></IconSlot>Wrap Text</Command></ToolRow>
            <ToolRow $gap={12}><Command><IconSlot $w={20}><MergeIcon /></IconSlot>Merge &amp; Center</Command><Drop label="Merge options" /></ToolRow>
          </ToolRows>
        </RibbonGroup>

        <RibbonGroup w={194} label="Number" launcher>
          <ToolRows>
            <ToolRow><Combo w={174} label="Number format" value="General" /></ToolRow>
            <ToolRow>
              <Tool $light>$</Tool><Drop label="Currency options" />
              <Tool $light>%</Tool>
              <Tool>,</Tool>
              <Rule />
              <Tool aria-label="Increase decimal"><DecimalIcon /></Tool>
              <Tool aria-label="Decrease decimal"><DecimalIcon less /></Tool>
            </ToolRow>
          </ToolRows>
        </RibbonGroup>

        <RibbonGroup w={239} pad={8} label="Styles">
          <BigButton w={94} icon={CondIcon} top="Conditional" bottom="Formatting" />
          <BigButton w={72} icon={TableIcon} top="Format as" bottom="Table" />
          <BigButton w={54} icon={CellStyleIcon} top="Cell" bottom="Styles" />
        </RibbonGroup>

        <RibbonGroup w={176} label="Cells">
          <BigButton w={52} icon={InsertIcon} top="Insert" />
          <BigButton w={52} icon={DeleteIcon} top="Delete" />
          <BigButton w={52} icon={FormatIcon} top="Format" />
        </RibbonGroup>

        <RibbonGroup w={249} pad={15} label="Editing">
          <Stack $w={111}>
            <CommandRow><Command><IconSlot><SigmaIcon /></IconSlot>AutoSum<IconSlot $w={24}><Chevron /></IconSlot></Command></CommandRow>
            <CommandRow><Command><IconSlot><FillIcon /></IconSlot>Fill<Chevron /></Command></CommandRow>
            <CommandRow><Command><IconSlot><EraserIcon /></IconSlot>Clear<Chevron /></Command></CommandRow>
          </Stack>
          <BigButton w={54} icon={SortIcon} top="Sort &amp;" bottom="Filter" />
          <BigButton w={56} icon={FindIcon} top="Find &amp;" bottom="Select" />
        </RibbonGroup>

        <RibbonGroup w={77} label="Add-ins">
          <BigButton w={56} icon={AddinsIcon} top="Add-ins" drop={false} />
        </RibbonGroup>
        <Collapse aria-label="Collapse ribbon"><Svg w={13} h={8}><path d="m1 7 5.500-5.500L12 7" stroke="#333" strokeWidth="1.400" /></Svg></Collapse>
      </Ribbon>

      <Banner>
        <Svg w={22} h={22}><circle cx="11" cy="11" r="11" fill="#4a7fb5" /><path d="M11 3v3M11 8v9M8.500 8.500H11M8 17h6" stroke="#fff" strokeWidth="2" /></Svg>
        <strong>GET GENUINE OFFICE</strong>
        <span>Your license isn't genuine, and you may be a victim of software counterfeiting. Avoid interruption and keep your files safe with genuine Office today.</span>
        <BannerButton $w={166}>Get genuine Office</BannerButton>
        <BannerButton $w={117}>Learn more</BannerButton>
        <Spacer />
        <PlainButton aria-label="Dismiss"><Svg w={12} h={12}><path d="m.5.500 11 11M11.500.500l-11 11" stroke="#333" strokeWidth="1.400" /></Svg></PlainButton>
      </Banner>

      <FormulaBar>
        <NameBox><input aria-label="Name box" defaultValue="F23" /><Triangle c="#777" /></NameBox>
        <Grip $margin="8px 17px 0" />
        <FormulaButtons>
          <PlainButton aria-label="Cancel"><Svg w={20} h={14}><path d="m3 1 13 12M16 1 3 13" stroke="#bdbdbd" strokeWidth="2" /></Svg></PlainButton>
          <PlainButton aria-label="Enter"><Svg w={20} h={14}><path d="m2 8 5 5L17 1" stroke="#c6c6c6" strokeWidth="3" /></Svg></PlainButton>
          <PlainButton aria-label="Insert function"><Svg w={20} h={22}><text x="2" y="16" fontSize="21" fontStyle="italic" fill="#555" fontFamily="Liberation Serif">f</text><text x="9" y="17" fontSize="16" fontStyle="italic" fill="#555" fontFamily="Liberation Serif">x</text></Svg></PlainButton>
        </FormulaButtons>
        <FormulaInput><input aria-label="Formula" /><Svg w={10} h={7}><path d="m1 1 4 4 4-4" stroke="#777" strokeWidth="2.400" /></Svg></FormulaInput>
      </FormulaBar>

      <Workspace>
        <Viewport>
          <Sheet>
            <colgroup>{colWidths.map((w, i) => <col key={i} style={{ width: w }} />)}</colgroup>
            <thead>
              <tr>
                <ColHead aria-label="Select all"><Svg w={16} h={18} style={{ marginLeft: 14 }}><path d="M16 0v15H0z" fill="#b4b4b4" /></Svg></ColHead>
                {columns.map((c) => <ColHead key={c} scope="col">{c}</ColHead>)}
              </tr>
            </thead>
            <SheetBody />
          </Sheet>
        </Viewport>
        <VScroll>
          <ScrollArrow aria-label="Scroll up"><Svg w={9} h={5}><path d="M0 5h9L4.500 0z" fill="#222" /></Svg></ScrollArrow>
          <ScrollPart $size={31} /><ScrollPart $size={369} $thumb /><ScrollPart $size={247} />
          <ScrollArrow aria-label="Scroll down"><Svg w={9} h={5}><path d="M0 0h9L4.500 5z" fill="#222" /></Svg></ScrollArrow>
        </VScroll>
      </Workspace>

      <SheetBar>
        <SheetNav>
          <Svg w={6} h={10}><path d="M6 0v10L0 5z" fill="#c6c6c6" /></Svg>
          <Svg w={6} h={10}><path d="M0 0v10l6-5z" fill="#c6c6c6" /></Svg>
        </SheetNav>
        <SheetTab>Charts</SheetTab>
        <SheetTab $active>Weekly Task</SheetTab>
        <AddSheet aria-label="New sheet"><Svg w={21} h={21}><circle cx="10.500" cy="10.500" r="9.500" stroke="#808080" /><path d="M5.500 10.500h10M10.500 5.500v10" stroke="#808080" strokeWidth="2" /></Svg></AddSheet>
        <Spacer />
        <Grip $margin="0 15px 0 0" />
        <HScroll>
          <ScrollArrow aria-label="Scroll left"><Svg w={5} h={9}><path d="M5 0v9L0 4.500z" fill="#222" /></Svg></ScrollArrow>
          <ScrollPart $size={628} $thumb /><ScrollPart $size={62} />
          <ScrollArrow aria-label="Scroll right"><Svg w={5} h={9}><path d="M0 0v9l5-4.500z" fill="#222" /></Svg></ScrollArrow>
        </HScroll>
      </SheetBar>

      <StatusBar>
        <span>Ready</span>
        <Svg w={16} h={15}><path d="M1.500 5v9.500h13V2.500H7" stroke="#666" /><path d="M7 1h8v4H7z" fill="#666" /><circle cx="3.500" cy="3.500" r="3.500" fill="#666" /><path d="M4 8h2m2 0h2m2 0h1M4 11h2m2 0h2m2 0h1" stroke="#666" /></Svg>
        <Access><Svg w={19} h={17}><path d="M5 1C-1 4-1 12 5 15" stroke="#555" strokeWidth="1.300" /><path d="M9 2v9M5 5h9M12 3l3 2-3 2" stroke="#555" strokeWidth="1.300" /><path d="m10 9 8 8M18 9l-8 8" stroke="#444" strokeWidth="2" /></Svg>Accessibility: Investigate</Access>
        <Spacer />
        <ViewButton $on aria-label="Normal view"><Svg w={17} h={16}><path d="M.5.5h16v15H.5zM.5 5.500h16M.5 10.500h16M6 .5v15M11 .5v15" stroke="#666" /></Svg></ViewButton>
        <ViewButton aria-label="Page layout view"><Svg w={17} h={16}><path d="M.5.5h16v15H.5zM4.500 2.500h8v11h-8zM6 5.500h5M6 8h5M6 10.500h5" stroke="#666" /></Svg></ViewButton>
        <ViewButton aria-label="Page break view"><Svg w={17} h={16}><path d="M.5.5h16v15H.5zM.5 9.500h11v-9M6 .5v9" stroke="#666" /></Svg></ViewButton>
        <PlainButton aria-label="Zoom out"><Svg w={18} h={10}><path d="M8 5h9" stroke="#333" strokeWidth="1.400" /></Svg></PlainButton>
        <ZoomRange type="range" aria-label="Zoom" min="0" max="200" defaultValue="100" />
        <PlainButton aria-label="Zoom in"><Svg w={10} h={10}><path d="M0 5h10M5 0v10" stroke="#333" strokeWidth="1.400" /></Svg></PlainButton>
        <ZoomValue>100%</ZoomValue>
      </StatusBar>

      <Taskbar>
        <StartButton aria-label="Start"><Svg w={20} h={20}><path d="m0 3 8.500-1.200V9.500H0zM9.500 1.600 20 0v9.500H9.500zM0 10.500h8.500v7.700L0 17zM9.500 10.500H20V20L9.500 18.400z" fill="#fff" /></Svg></StartButton>
        <SearchBox>
          <Svg w={21} h={21}><circle cx="13" cy="8" r="6.800" stroke="#eee" strokeWidth="1.500" /><path d="m8 13-7 7.500" stroke="#eee" strokeWidth="1.500" /></Svg>
          <input placeholder="Type here to search" aria-label="Search" />
          <Salad />
        </SearchBox>
        {apps.map(({ name, icon: Icon, bg, line }) => (
          <AppButton key={name} aria-label={name} $bg={bg} $line={line}><Icon /></AppButton>
        ))}
        <Tray>
          <Weather><WeatherIcon /><span>28°C</span><span>Mostly cloudy</span></Weather>
          <TrayButton aria-label="Hidden icons"><Svg w={16} h={9}><path d="m1 8 7-7 7 7" stroke="#fff" strokeWidth="1.500" /></Svg></TrayButton>
          <TrayButton aria-label="Meet now"><Svg w={16} h={18}><rect x="1" y="4" width="9" height="10" rx="1.500" stroke="#fff" strokeWidth="1.300" /><path d="m10 8 4-3v8l-4-3M2 1.500q4-2 8 0M2 16.500q4 2 8 0" stroke="#fff" strokeWidth="1.300" /></Svg></TrayButton>
          <TrayButton aria-label="Battery"><Svg w={20} h={12}><path d="M.7.700h16.600v10.600H.700z" stroke="#fff" strokeWidth="1.400" /><path d="M2.500 2.500h4v7h-4zM18 4h2v4h-2z" fill="#fff" /></Svg></TrayButton>
          <TrayButton aria-label="Network"><Svg w={16} h={16}><path d="M1 15A14 14 0 0 1 15 1" stroke="#666" strokeWidth="1.300" /><path d="M5 15A10 10 0 0 1 15 5M8.500 15A6.500 6.500 0 0 1 15 8.500" stroke="#ddd" strokeWidth="1.300" /><circle cx="14" cy="14" r="1.800" fill="#fff" /></Svg></TrayButton>
          <TrayButton aria-label="Volume"><Svg w={20} h={16}><path d="M1 5.500h3l4-4v13l-4-4H1zM10.500 5.500q2 2.500 0 5M13.500 3.500q3 4.500 0 9M16.500 1.500q4.500 6.500 0 13" stroke="#fff" strokeWidth="1.300" /></Svg></TrayButton>
          <Clock><div>9:56 PM</div><div>3/30/2024</div></Clock>
          <TrayButton aria-label="Notifications"><Svg w={20} h={20}><path d="M1 1h18v14h-6l-3 3.500L7 15H1z" stroke="#fff" strokeWidth="1.400" /></Svg></TrayButton>
          <DesktopEdge />
        </Tray>
      </Taskbar>
    </Window>
  );
}
